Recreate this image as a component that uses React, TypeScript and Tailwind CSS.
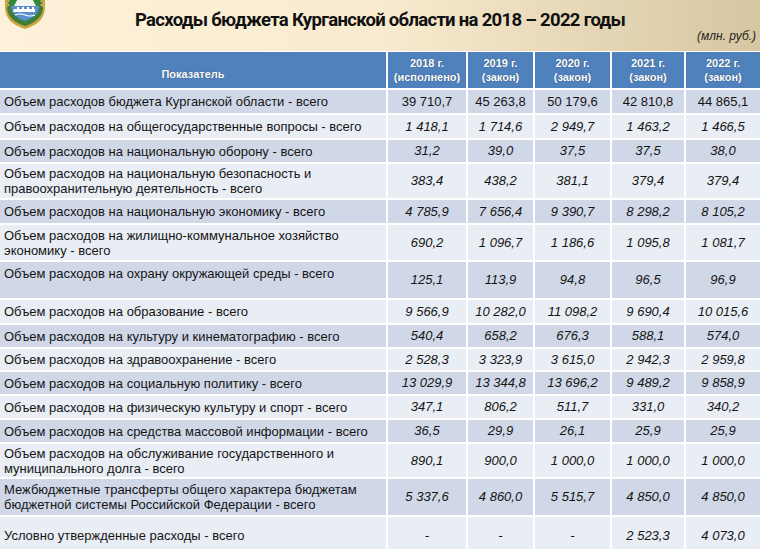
import React from 'react';

type Row = {
  label: string[];
  values: string[];
  h: string;
  top?: boolean;
  plain?: boolean;
};

const rows: Row[] = [
  { label: ['Объем расходов бюджета Курганской области - всего'], values: ['39 710,7', '45 263,8', '50 179,6', '42 810,8', '44 865,1'], h: 'h-[23px]', plain: true },
  { label: ['Объем расходов на общегосударственные вопросы - всего'], values: ['1 418,1', '1 714,6', '2 949,7', '1 463,2', '1 466,5'], h: 'h-[23px]' },
  { label: ['Объем расходов на национальную оборону - всего'], values: ['31,2', '39,0', '37,5', '37,5', '38,0'], h: 'h-[22px]' },
  { label: ['Объем расходов на национальную безопасность и', 'правоохранительную деятельность - всего'], values: ['383,4', '438,2', '381,1', '379,4', '379,4'], h: 'h-[34px]' },
  { label: ['Объем расходов на национальную экономику - всего'], values: ['4 785,9', '7 656,4', '9 390,7', '8 298,2', '8 105,2'], h: 'h-[23px]' },
  { label: ['Объем расходов на жилищно-коммунальное хозяйство', 'экономику - всего'], values: ['690,2', '1 096,7', '1 186,6', '1 095,8', '1 081,7'], h: 'h-[35px]' },
  { label: ['Объем расходов на охрану окружающей среды - всего'], values: ['125,1', '113,9', '94,8', '96,5', '96,9'], h: 'h-[36px]', top: true },
  { label: ['Объем расходов на образование - всего'], values: ['9 566,9', '10 282,0', '11 098,2', '9 690,4', '10 015,6'], h: 'h-[23px]' },
  { label: ['Объем расходов на культуру и кинематографию - всего'], values: ['540,4', '658,2', '676,3', '588,1', '574,0'], h: 'h-[22px]' },
  { label: ['Объем расходов на здравоохранение - всего'], values: ['2 528,3', '3 323,9', '3 615,0', '2 942,3', '2 959,8'], h: 'h-[21px]' },
  { label: ['Объем расходов на социальную политику - всего'], values: ['13 029,9', '13 344,8', '13 696,2', '9 489,2', '9 858,9'], h: 'h-[22px]' },
  { label: ['Объем расходов на физическую культуру и спорт - всего'], values: ['347,1', '806,2', '511,7', '331,0', '340,2'], h: 'h-[22px]' },
  { label: ['Объем расходов на средства массовой информации - всего'], values: ['36,5', '29,9', '26,1', '25,9', '25,9'], h: 'h-[22px]' },
  { label: ['Объем расходов на обслуживание государственного и', 'муниципального долга - всего'], values: ['890,1', '900,0', '1 000,0', '1 000,0', '1 000,0'], h: 'h-[33px]' },
  { label: ['Межбюджетные трансферты общего характера бюджетам', 'бюджетной системы Российской Федерации - всего'], values: ['5 337,6', '4 860,0', '5 515,7', '4 850,0', '4 850,0'], h: 'h-[36px]' },
  { label: ['Условно утвержденные расходы - всего'], values: ['-', '-', '-', '2 523,3', '4 073,0'], h: 'h-[37px]' },
];

const years = [
  ['2018 г.', '(исполнено)'],
  ['2019 г.', '(закон)'],
  ['2020 г.', '(закон)'],
  ['2021 г.', '(закон)'],
  ['2022 г.', '(закон)'],
];

const cols = 'grid grid-cols-[386px_78px_65px_75px_72px_74px] gap-x-[2px]';

function Emblem() {
  return (
    <svg viewBox="0 0 44 40" className="w-[44px] h-[40px]">
      {/* wreath */}
      <path d="M2 0 L2 18 Q2 34 22 40 Q42 34 42 18 L42 0 Z" fill="#c9a43a" />
      <path d="M4 0 L4 18 Q4 31 22 37 Q40 31 40 18 L40 0 Z" fill="#3f7d3a" />
      <path d="M3 6 l3 2 -3 2 3 2 -3 2 3 2 -3 2 M41 6 l-3 2 3 2 -3 2 3 2 -3 2 3 2" stroke="#d8b64a" strokeWidth="1.2" fill="none" />
      {/* shield */}
      <path d="M8 0 L8 17 Q8 27 22 32 Q36 27 36 17 L36 0 Z" fill="#2f8a3c" />
      <path d="M22 -4 L33 17 L11 17 Z" fill="#f4f4ee" />
      <path d="M8 17 L36 17 Q36 27 22 32 Q8 27 8 17 Z" fill="#5b8fd0" />
      <path d="M11 20 h3 v-2 h2 v2 h3 v-2 h2 v2 h3 v-2 h2 v2 h3 v-2 h2 v2 h1 v3 h-22 z" fill="#ffffff" />
      <path d="M12 26 Q17 24 22 26 Q27 28 32 26" stroke="#ffffff" strokeWidth="1.2" fill="none" />
    </svg>
  );
}

export default function App() {
  return (
    <div className="w-[760px] h-[549px] overflow-hidden bg-white font-['Liberation_Sans',Arial,sans-serif] text-[#151515]">
      {/* Title band */}
      <div className="h-[51px] bg-gradient-to-r from-[#fdf1d9] via-[#f8ebcf] to-[#d6c6a2] flex items-start relative">
        <div className="w-[52px] pl-[3px] -mt-[11px]">
          <Emblem />
        </div>
        <div className="flex-1 flex flex-col">
          <h1 className="pl-[83px] pt-[8px] text-[18.5px] leading-[24px] font-bold font-['Roboto',sans-serif] text-[#111] tracking-[-0.7px]">
            Расходы бюджета Курганской области на 2018 – 2022 годы
          </h1>
          <div className="self-end pr-[4px] -mt-[3px] text-[12px] leading-[14px] italic text-[#222]">(млн. руб.)</div>
        </div>
      </div>

      {/* Table */}
      <div className="flex flex-col gap-y-[2px] pt-px bg-white">
        <div className={`${cols} h-[36px]`}>
          <div className="bg-[#4f81bd] flex items-end justify-center pb-[6px] text-white text-[11px] font-bold [text-shadow:0_0_1px_rgba(0,0,0,0.5)]">
            Показатель
          </div>
          {years.map((y) => (
            <div key={y[0]} className="bg-[#4f81bd] flex flex-col items-center justify-center text-white text-[11px] leading-[14px] font-bold [text-shadow:0_0_1px_rgba(0,0,0,0.5)]">
              <span>{y[0]}</span>
              <span>{y[1]}</span>
            </div>
          ))}
        </div>

        {rows.map((r, i) => {
          const bg = i % 2 === 0 ? 'bg-[#d0d8e8]' : 'bg-[#e9edf4]';
          return (
            <div key={i} className={`${cols} ${r.h}`}>
              <div className={`${bg} flex flex-col ${r.top ? 'justify-start pt-[4px]' : 'justify-center'} pl-[4px] text-[13px] leading-[15px]`}>
                {r.label.map((l) => (
                  <span key={l} className="whitespace-nowrap">{l}</span>
                ))}
              </div>
              {r.values.map((v, j) => (
                <div key={j} className={`${bg} flex items-center justify-center text-[13px] ${r.plain ? '' : 'italic'}`}>
                  {v}
                </div>
              ))}
            </div>
          );
        })}
      </div>
    </div>
  );
}
